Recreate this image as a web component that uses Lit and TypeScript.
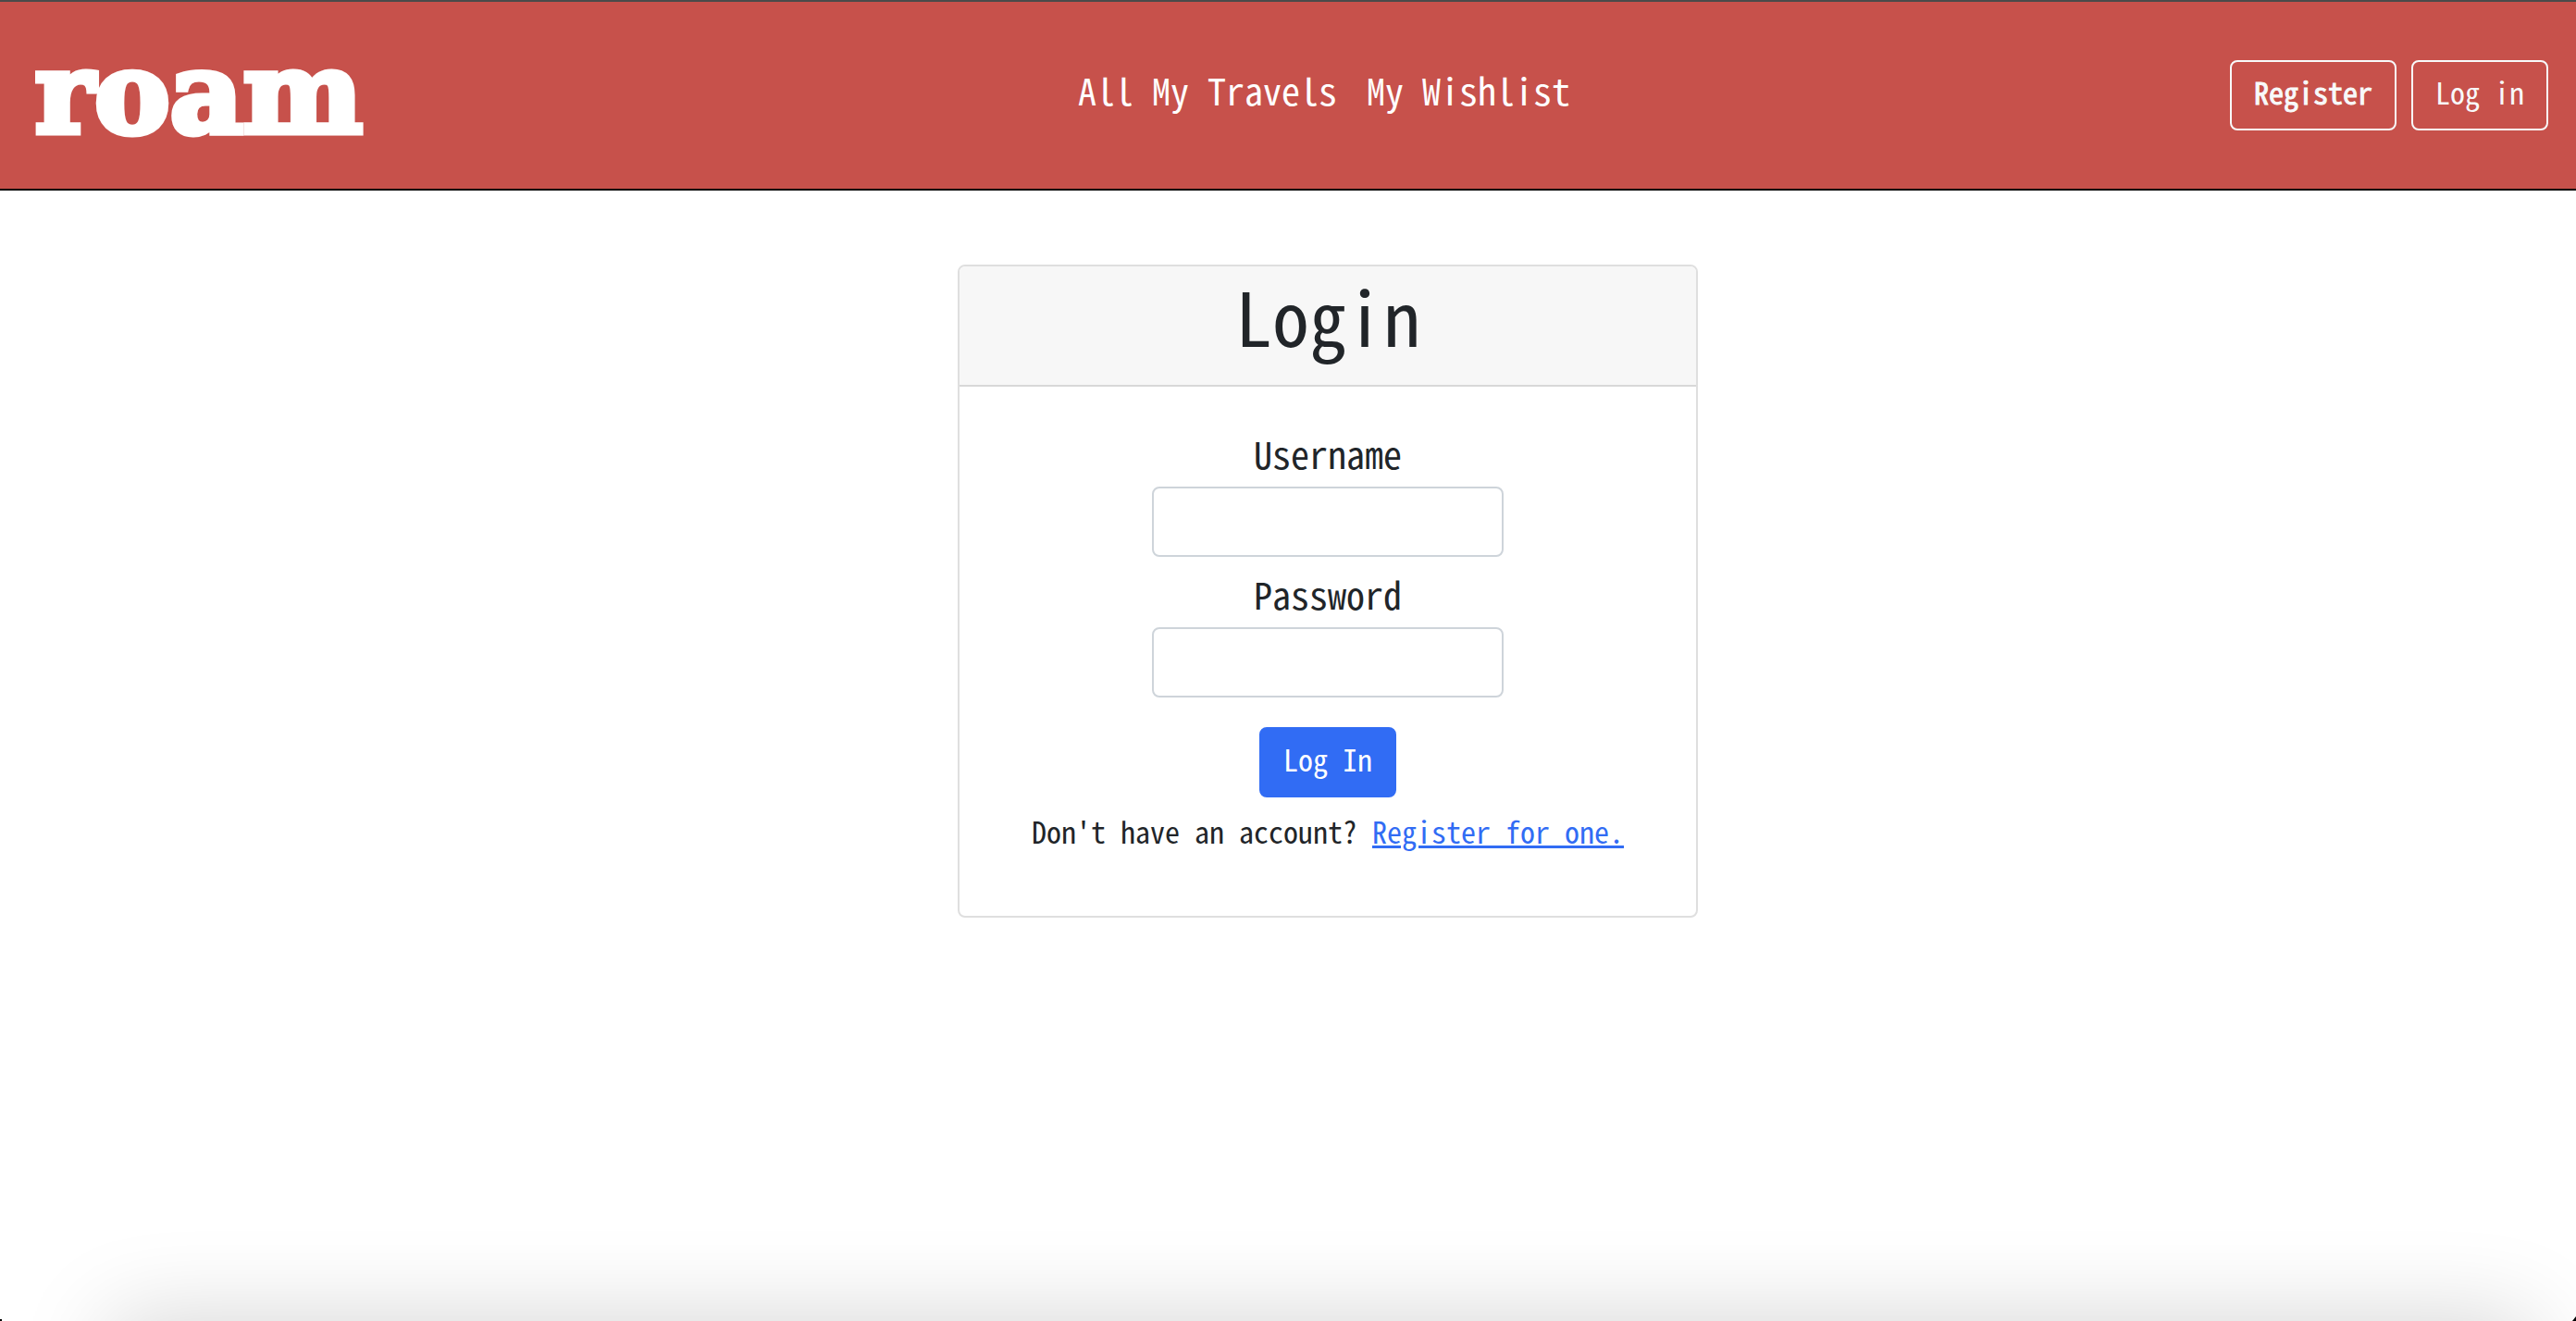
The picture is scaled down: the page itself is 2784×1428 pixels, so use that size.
import { LitElement, html, css } from "lit";
import { customElement } from "lit/decorators.js";

@customElement("app-root")
export class AppRoot extends LitElement {
  static styles = css`
    :host {
      display: block;
      --mono: "Noto Sans Mono CJK JP", "Liberation Mono", monospace;
      font-family: var(--mono);
      font-size: 32px;
      line-height: 48px;
      color: #212529;
    }
    * {
      box-sizing: border-box;
    }
    .page {
      position: relative;
      min-height: 100vh;
      overflow: hidden;
      background: #fff;
    }
    .bar {
      display: flex;
      align-items: center;
      justify-content: space-between;
      height: 206px;
      padding: 0 30px 0 36px;
      background: #c7514b;
      border-top: 2px solid #4a4a4a;
      border-bottom: 2px solid #000;
    }
    .logo {
      width: 416px;
      padding: 0 0 6px 2px;
      font-family: "DejaVu Serif", serif;
      font-weight: 700;
      font-size: 122px;
      line-height: 160px;
      color: #fff;
      text-decoration: none;
      -webkit-text-stroke: 7px #fff;
    }
    .links {
      display: flex;
      gap: 32px;
    }
    .link {
      padding-bottom: 12px;
      font-size: 40px;
      line-height: 48px;
      color: #fff;
      text-decoration: none;
    }
    .actions {
      display: flex;
      gap: 16px;
    }
    .btn {
      height: 76px;
      padding: 0 24px 8px;
      border: 2px solid #f8f9fa;
      border-radius: 8px;
      background: transparent;
      color: #f8f9fa;
      font-family: var(--mono);
      font-size: 32px;
      line-height: 48px;
    }
    .strong {
      -webkit-text-stroke: 1px #f8f9fa;
    }
    .primary {
      margin-top: 32px;
      border-color: #316cf4;
      background: #316cf4;
      color: #fff;
    }
    .main {
      display: flex;
      justify-content: center;
      padding-top: 80px;
      padding-left: 86px;
    }
    .card {
      width: 800px;
      border: 2px solid #dfdfdf;
      border-radius: 8px;
    }
    .head {
      padding: 16px;
      background: #f7f7f7;
      border-bottom: 2px solid #d8d8d8;
      border-radius: 6px 6px 0 0;
      text-align: center;
    }
    .title {
      margin: 0;
      padding-bottom: 24px;
      font-size: 80px;
      line-height: 72px;
      font-weight: 400;
    }
    .form {
      display: flex;
      flex-direction: column;
      align-items: center;
      padding: 48px 32px 64px;
    }
    .label {
      padding-bottom: 12px;
      font-size: 40px;
      line-height: 48px;
    }
    .input {
      width: 380px;
      height: 76px;
      padding: 12px 24px;
      border: 2px solid #ced4da;
      border-radius: 8px;
      background: #fff;
      color: inherit;
      font: inherit;
    }
    .input + .label {
      margin-top: 16px;
    }
    .note {
      margin: 16px 0 0;
      padding-bottom: 8px;
      line-height: 40px;
      white-space: nowrap;
    }
    .register {
      color: #316cf4;
      text-decoration-thickness: 3px;
    }
    .shade {
      position: absolute;
      left: 120px;
      right: 48px;
      top: 100%;
      height: 100px;
      box-shadow: 0 0 100px rgba(0, 0, 0, 0.18);
    }
    .corner {
      position: absolute;
      bottom: 0;
      background: #000;
    }
    .corner-left {
      left: 0;
      width: 2px;
      height: 2px;
    }
    .corner-right {
      right: 0;
      width: 4px;
      height: 5px;
      clip-path: polygon(100% 0, 100% 100%, 0 100%);
    }
  `;

  render() {
    return html`
      <div class="page">
        <header class="bar">
          <a class="logo" href="#">roam</a>
          <nav class="links">
            <a class="link" href="#travels">All My Travels</a>
            <a class="link" href="#wishlist">My Wishlist</a>
          </nav>
          <div class="actions">
            <button class="btn strong" type="button">Register</button>
            <button class="btn" type="button">Log in</button>
          </div>
        </header>
        <main class="main">
          <section class="card">
            <div class="head"><h1 class="title">Login</h1></div>
            <form class="form" @submit=${(e: Event) => e.preventDefault()}>
              <label class="label" for="username">Username</label>
              <input class="input" id="username" type="text" />
              <label class="label" for="password">Password</label>
              <input class="input" id="password" type="password" />
              <button class="btn primary" type="submit">Log In</button>
              <p class="note">Don't have an account? <a class="register" href="#register">Register for one.</a></p>
            </form>
          </section>
        </main>
        <div class="shade"></div>
        <div class="corner corner-left"></div>
        <div class="corner corner-right"></div>
      </div>
    `;
  }
}
